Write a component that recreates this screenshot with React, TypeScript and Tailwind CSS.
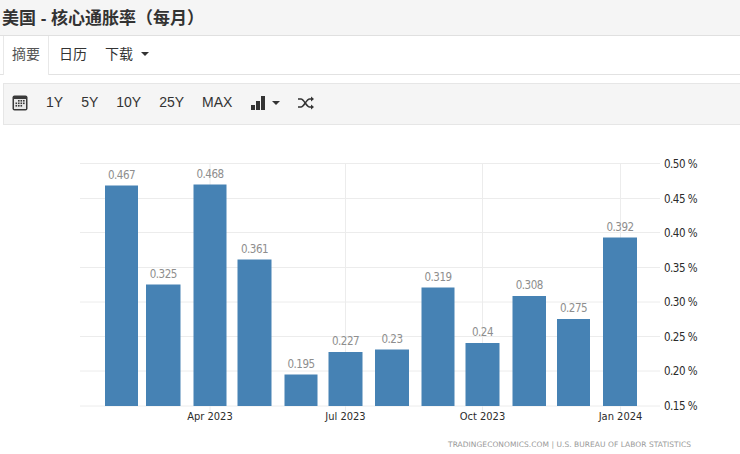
const ranges = ["1Y", "5Y", "10Y", "25Y", "MAX"];

// x, width, top, value
const bars = [
  { x: 105, w: 33, top: 185.5, label: "0.467" },
  { x: 146, w: 34.5, top: 284.5, label: "0.325" },
  { x: 193.5, w: 33, top: 184.5, label: "0.468" },
  { x: 237.5, w: 34, top: 259.5, label: "0.361" },
  { x: 284.5, w: 33, top: 374.5, label: "0.195" },
  { x: 328.5, w: 34, top: 352, label: "0.227" },
  { x: 375, w: 34, top: 349.5, label: "0.23" },
  { x: 421.5, w: 33, top: 287.5, label: "0.319" },
  { x: 465.5, w: 34, top: 343, label: "0.24" },
  { x: 512.5, w: 33.5, top: 296, label: "0.308" },
  { x: 557, w: 33, top: 319, label: "0.275" },
  { x: 603, w: 34, top: 237.5, label: "0.392" },
];

const yTicks = [
  { y: 163.5, label: "0.50 %" },
  { y: 198.5, label: "0.45 %" },
  { y: 232.5, label: "0.40 %" },
  { y: 267.5, label: "0.35 %" },
  { y: 302, label: "0.30 %" },
  { y: 336.5, label: "0.25 %" },
  { y: 371, label: "0.20 %" },
  { y: 406, label: "0.15 %" },
];

const xTicks = [
  { x: 210, label: "Apr 2023" },
  { x: 345.5, label: "Jul 2023" },
  { x: 482.5, label: "Oct 2023" },
  { x: 620.5, label: "Jan 2024" },
];

function Caret() {
  return <span className="w-0 h-0 border-x-[4px] border-x-transparent border-t-[4px] border-t-[#333]" />;
}

function CalendarIcon() {
  return (
    <svg width="16" height="16" viewBox="0 0 16 16" className="text-[#3a3a3a]">
      <rect x="0.5" y="0.5" width="15" height="15" rx="2" fill="currentColor" />
      <rect x="2" y="4" width="12" height="10" fill="#e8e8e8" />
      <g fill="#3a3a3a">
        <rect x="6" y="5" width="1.6" height="1.6" />
        <rect x="8.5" y="5" width="1.6" height="1.6" />
        <rect x="11" y="5" width="1.6" height="1.6" />
        <rect x="3.5" y="7.5" width="1.6" height="1.6" />
        <rect x="6" y="7.5" width="1.6" height="1.6" />
        <rect x="8.5" y="7.5" width="1.6" height="1.6" />
        <rect x="11" y="7.5" width="1.6" height="1.6" />
        <rect x="3.5" y="10" width="1.6" height="1.6" />
        <rect x="6" y="10" width="1.6" height="1.6" />
        <rect x="8.5" y="10" width="1.6" height="1.6" />
      </g>
    </svg>
  );
}

function BarsIcon() {
  return (
    <svg width="14" height="14" viewBox="0 0 14 14" fill="#333">
      <rect x="0" y="9" width="4" height="5" />
      <rect x="5" y="5" width="4" height="9" />
      <rect x="10" y="0" width="4" height="14" />
    </svg>
  );
}

function ShuffleIcon() {
  return (
    <svg width="16" height="14" viewBox="0 0 16 14" fill="none" stroke="#333" strokeWidth="1.5">
      <path d="M0 3h3c3 0 5.500 8 8.500 8H14" />
      <path d="M0 11h3c3 0 5.500-8 8.500-8H14" />
      <path d="M13 0.500v5l3-2.500z" fill="#333" stroke="none" />
      <path d="M13 8.500v5l3-2.500z" fill="#333" stroke="none" />
    </svg>
  );
}

function Chart() {
  return (
    <svg width="740" height="329" viewBox="0 125 740 329" className="block" style={{ fontFamily: "'DejaVu Sans Condensed', 'DejaVu Sans', sans-serif" }}>
      {yTicks.map((t) => (
        <line key={t.y} x1="80" x2="660" y1={t.y} y2={t.y} stroke="#ececec" />
      ))}
      {xTicks.map((t) => (
        <line key={t.x} x1={t.x} x2={t.x} y1="163" y2="411" stroke="#ececec" />
      ))}
      {bars.map((b) => (
        <g key={b.label + b.x}>
          <rect x={b.x} y={b.top} width={b.w} height={406 - b.top} fill="#4682b4" />
          <text x={b.x + b.w / 2} y={b.top - 7} textAnchor="middle" fontSize="11.5" letterSpacing="-0.5" fill="#8e8e8e">
            {b.label}
          </text>
        </g>
      ))}
      {yTicks.map((t) => (
        <text key={t.label} x="664" y={t.y + 4} fontSize="11.5" fill="#2b2b2b" letterSpacing="-0.5">
          {t.label}
        </text>
      ))}
      {xTicks.map((t) => (
        <text key={t.label} x={t.x} y="419.500" textAnchor="middle" fontSize="11" fill="#2b2b2b">
          {t.label}
        </text>
      ))}
      <text x="448" y="447" fontSize="7.5" fill="#999" textLength="243" style={{ fontFamily: "'DejaVu Sans', sans-serif" }}>
        TRADINGECONOMICS.COM | U.S. BUREAU OF LABOR STATISTICS
      </text>
    </svg>
  );
}

export default function App() {
  return (
    <div className="w-[740px] h-[454px] overflow-hidden bg-white text-[#333] font-['Liberation_Sans','Noto_Sans_CJK_SC',sans-serif]">
      <div className="h-[36px] pt-[1px] bg-[#f5f5f5] border-b border-[#e0e0e0] flex items-center pl-[2px] text-[17px] font-bold leading-none">
        美国 - 核心通胀率（每月）
      </div>

      <div className="h-[39px] border-b border-[#e2e2e2] flex pl-[3px] text-[14px]">
        <div className="w-[46px] h-[39px] pb-[2px] bg-white border-x border-[#e8e8e8] flex items-center justify-center text-[#555]">
          摘要
        </div>
        <div className="flex items-center pb-[2px] pl-[10px] gap-[18px]">
          <span>日历</span>
          <span className="flex items-center gap-[8px]">
            下载 <Caret />
          </span>
        </div>
      </div>

      <div className="mt-[8px] ml-[3px] h-[42px] pb-[3px] bg-[#f5f5f5] border-y border-[#e6e6e6] border-l flex items-center pl-[8px] text-[14px]">
        <CalendarIcon />
        <div className="flex items-center gap-[18px] ml-[18px]">
          {ranges.map((r) => (
            <span key={r}>{r}</span>
          ))}
        </div>
        <div className="flex items-center ml-[19px] gap-[7px]">
          <BarsIcon />
          <Caret />
        </div>
        <div className="ml-[18px] flex">
          <ShuffleIcon />
        </div>
      </div>

      <Chart />
    </div>
  );
}
